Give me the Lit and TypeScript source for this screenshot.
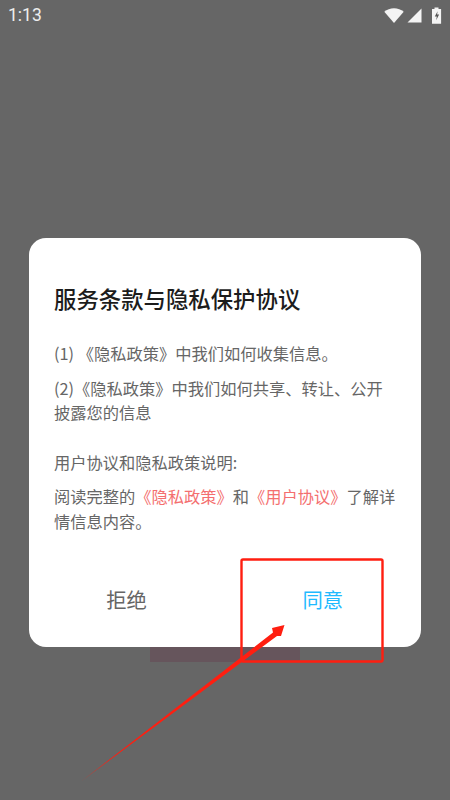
import { LitElement, html, css } from "lit";
import { customElement } from "lit/decorators.js";

@customElement("app-root")
export class AppRoot extends LitElement {
  static styles = css`
    :host {
      display: block;
      position: relative;
      width: 450px;
      height: 800px;
      overflow: hidden;
      background: #666666;
      font-family: "Noto Sans CJK SC", "Noto Sans", sans-serif;
      text-spacing-trim: space-all;
    }
    .status {
      height: 30px;
      display: flex;
      align-items: center;
      justify-content: space-between;
      padding: 0 7px 0 8px;
      color: #eeeeee;
      font: 400 17.5px Roboto, sans-serif;
    }
    .status-icons {
      display: flex;
      align-items: center;
      gap: 3px;
    }
    .status-icons svg {
      display: block;
    }
    .battery {
      margin-left: 6px;
    }
    .dialog {
      position: relative;
      z-index: 1;
      box-sizing: border-box;
      width: 392.5px;
      height: 409px;
      margin: 208px 0 0 28.5px;
      padding: 42px 24.5px 0 25.5px;
      background: #ffffff;
      border-radius: 17px;
      display: flex;
      flex-direction: column;
    }
    h1 {
      margin: 0 0 25px;
      font-size: 22.4px;
      line-height: 36px;
      font-weight: 500;
      color: #1c1c1c;
    }
    p {
      margin: 0 0 10px;
      font-size: 16.25px;
      line-height: 24.5px;
      color: #666666;
    }
    .section {
      margin-top: 15px;
    }
    .link {
      color: #f46f6f;
    }
    .actions {
      display: flex;
      margin: auto -24.5px 0 -25.5px;
      height: 96px;
    }
    .action {
      flex: 1;
      display: flex;
      align-items: center;
      justify-content: center;
      font-size: 20.4px;
      color: #666666;
    }
    .agree {
      color: #1fbaff;
    }
    .peek {
      position: absolute;
      left: 150px;
      top: 647px;
      width: 150px;
      height: 15px;
      background: #66555c;
    }
    .annotation {
      position: absolute;
      inset: 0;
      z-index: 2;
      pointer-events: none;
    }
  `;

  render() {
    return html`
      <div class="status">
        <span>1:13</span>
        <span class="status-icons">
          <svg width="20" height="15" viewBox="0 0 20 15">
            <path d="M0.3 3.8C3 1.4 6.3 0.2 10 0.2s7 1.2 9.7 3.6L10 15z" fill="#f4f4f4" />
          </svg>
          <svg width="15" height="15" viewBox="0 0 15 15">
            <path d="M14.5 0.5V14.5H0.5z" fill="#f4f4f4" />
          </svg>
          <svg class="battery" width="12" height="17" viewBox="0 0 12 17">
            <path d="M3.5 0.5h4v1.6h2.6v14.6H1V2.1h2.5z" fill="#f4f4f4" />
            <path d="M6.6 4.2L3.8 9.6h2l-.6 3.6 2.9-5.6h-2z" fill="#555555" />
          </svg>
        </span>
      </div>
      <div class="peek"></div>
      <div class="dialog">
        <h1>服务条款与隐私保护协议</h1>
        <p>(1) 《隐私政策》中我们如何收集信息。</p>
        <p>(2)《隐私政策》中我们如何共享、转让、公开披露您的信息</p>
        <p class="section">用户协议和隐私政策说明:</p>
        <p>阅读完整的<span class="link">《隐私政策》</span>和<span class="link">《用户协议》</span>了解详情信息内容。</p>
        <div class="actions">
          <div class="action">拒绝</div>
          <div class="action agree">同意</div>
        </div>
      </div>
      <svg class="annotation" width="450" height="800" viewBox="0 0 450 800">
        <defs>
          <linearGradient id="tail" gradientUnits="userSpaceOnUse" x1="82" y1="781" x2="110" y2="759">
            <stop offset="0" stop-color="#ff1e10" stop-opacity="0.6" />
            <stop offset="1" stop-color="#ff1e10" />
          </linearGradient>
        </defs>
        <rect x="241.5" y="559.5" width="141" height="102" rx="1.5" fill="none" stroke="#ff1e10" stroke-width="2.4" />
        <path d="M81 781.5L273 632.5L272 628L284.5 625L281 636L277 636z" fill="url(#tail)" />
      </svg>
    `;
  }
}
